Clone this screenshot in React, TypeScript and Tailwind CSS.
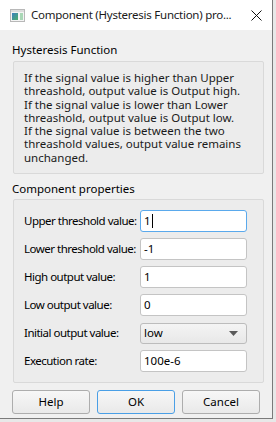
const ROWS: { label: string; value: string; kind?: 'combo' | 'focus' }[] = [
  { label: 'Upper threshold value:', value: '1', kind: 'focus' },
  { label: 'Lower threshold value:', value: '-1' },
  { label: 'High output value:', value: '1' },
  { label: 'Low output value:', value: '0' },
  { label: 'Initial output value:', value: 'low', kind: 'combo' },
  { label: 'Execution rate:', value: '100e-6' },
];

const DESC = [
  'If the signal value is higher than Upper',
  'threashold, output value is Output high.',
  'If the signal value is lower than Lower',
  'threashold, output value is Output low.',
  'If the signal value is between the two',
  'threashold values, output value remains',
  'unchanged.',
];

function AppIcon() {
  return (
    <svg width="15" height="13" viewBox="0 0 15 13">
      <rect x="0.5" y="0.5" width="14" height="12" fill="#f4f4f4" stroke="#b8b8b8" />
      <rect x="1" y="1" width="13" height="2" fill="#dcdcdc" />
      <defs>
        <linearGradient id="g" x1="0" y1="0" x2="1" y2="1">
          <stop offset="0" stopColor="#3a7fc0" />
          <stop offset="1" stopColor="#4caf6a" />
        </linearGradient>
      </defs>
      <rect x="2" y="4" width="6" height="7" fill="url(#g)" />
      <rect x="10" y="4" width="3" height="7" fill="#a9d7b6" />
    </svg>
  );
}

function Field({ value, kind }: { value: string; kind?: 'combo' | 'focus' }) {
  if (kind === 'combo') {
    return (
      <div className="flex h-[21px] w-[107px] items-center justify-between rounded-[3px] border border-[#bcbcbc] bg-gradient-to-b from-[#f4f4f4] to-[#e8e8e8] pl-[3px] pr-[8px]">
        <span>{value}</span>
        <svg width="9" height="5" viewBox="0 0 9 5">
          <path d="M0 0h9L4.5 5z" fill="#5a5a5a" />
        </svg>
      </div>
    );
  }
  return (
    <div
      className={`flex h-[22px] w-[107px] items-center rounded-[3px] border bg-white pl-[3px] ${
        kind === 'focus' ? 'border-[#5aa9ec]' : 'border-[#c4c4c4]'
      }`}
    >
      <span>{value}</span>
      {kind === 'focus' && <span className="ml-px h-[14px] w-px bg-black" />}
    </div>
  );
}

export default function App() {
  return (
    <div
      className="h-[422px] w-[276px] bg-[#e8e8e8] text-[11.5px] text-black"
      style={{ fontFamily: '"Segoe UI", "Noto Sans", sans-serif' }}
    >
      <div className="flex h-[419px] w-[273px] flex-col border-r border-b border-[#7a7a7a] bg-[#f0f0f0]">
        {/* Title bar */}
        <div className="flex h-[30px] items-center bg-white pl-[10px]">
          <AppIcon />
          <span className="ml-[6px] flex-1 overflow-hidden whitespace-nowrap text-[11.5px] tracking-[-0.25px] text-[#1a1a1a]">
            Component (Hysteresis Function) pro...
          </span>
          <svg width="11" height="11" viewBox="0 0 11 11" className="mr-[10px] ml-[6px] shrink-0">
            <path d="M0.5 0.5l10 10M10.5 0.5l-10 10" stroke="#111" strokeWidth="1" />
          </svg>
        </div>

        <div className="flex flex-col px-[12px]">
          <div className="mt-[12px] leading-[15px]">Hysteresis Function</div>
          <div className="mt-[4px] ml-px h-[113px] w-[251px] rounded-[2px] border border-[#d9d9d9] bg-[#ececec] px-[10px] pt-[9px] text-[#1a1a1a]">
            <p className="whitespace-nowrap leading-[13.3px]">
              {DESC.map((l, i) => (
                <span key={l}>
                  {l}
                  {i < DESC.length - 1 && <br />}
                </span>
              ))}
            </p>
          </div>

          <div className="mt-[7px] leading-[15px]">Component properties</div>
          <div className="mt-[3px] ml-px flex h-[184px] w-[251px] flex-col gap-[6px] rounded-[2px] border border-[#d9d9d9] bg-[#ececec] pt-[10px] pl-[10px]">
            {ROWS.map(r => (
              <div key={r.label} className="flex h-[22px] items-center">
                <span className="w-[116px] whitespace-nowrap tracking-[-0.5px]">{r.label}</span>
                <Field value={r.value} kind={r.kind} />
              </div>
            ))}
          </div>

          <div className="mt-[7px] flex gap-[7px]">
            {['Help', 'OK', 'Cancel'].map(b => (
              <button
                key={b}
                className={`h-[24px] w-[79px] rounded-[3px] border bg-gradient-to-b from-[#f7f7f7] to-[#e9e9e9] text-[11.5px] ${
                  b === 'OK' ? 'border-[#4a9fe6]' : 'border-[#adadad]'
                }`}
              >
                {b}
              </button>
            ))}
          </div>
        </div>
      </div>
    </div>
  );
}
